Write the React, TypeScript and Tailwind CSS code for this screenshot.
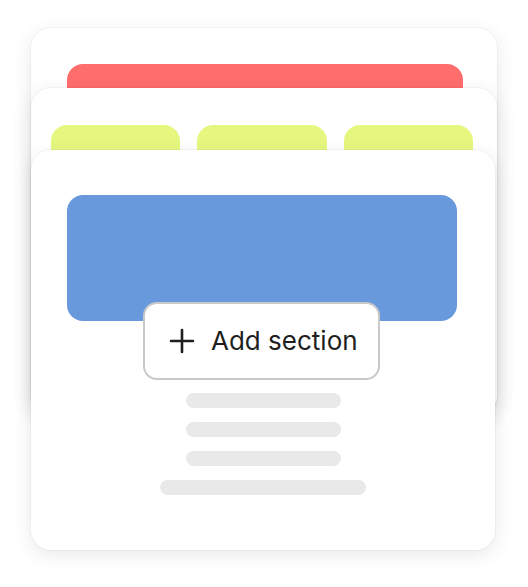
import React from 'react';

const cardShadow = 'shadow-[0_5px_20px_rgba(0,0,0,0.09),0_0_0_1px_rgba(0,0,0,0.03)]';

export default function App() {
    return (
        <div className="w-[528px] h-[587px] bg-white pt-[28px] pl-[31px]">
            <div className="grid w-[466px]">
                {/* back card */}
                <div className={`[grid-area:1/1] h-[387px] rounded-[20px] bg-white pt-[36px] pl-[36px] ${cardShadow}`}>
                    <div className="w-[396px] h-[40px] rounded-t-[16px] bg-[#ff6d6d]" />
                </div>

                {/* middle card */}
                <div className={`[grid-area:1/1] mt-[60px] h-[327px] rounded-[20px] bg-white pt-[37px] pl-[20px] ${cardShadow}`}>
                    <div className="grid grid-cols-3 gap-[17px] w-[422px]">
                        <div className="h-[40px] rounded-t-[16px] bg-[#e6f780]" />
                        <div className="h-[40px] rounded-t-[16px] bg-[#e6f780]" />
                        <div className="h-[40px] rounded-t-[16px] bg-[#e6f780]" />
                    </div>
                </div>

                {/* front card */}
                <div className={`[grid-area:1/1] mt-[122px] w-[464px] h-[400px] rounded-[20px] bg-white pt-[45px] flex flex-col items-center ${cardShadow}`}>
                    <div className="w-[390px] h-[126px] rounded-[16px] bg-[#6999dd] -ml-[3px]" />
                    <button className="-mt-[19px] -ml-[3px] w-[237px] h-[78px] rounded-[14px] border-2 border-[#c9c9c9] bg-white flex items-center pl-[24px] gap-[16px] text-[#1f1f1f]">
                        <svg width="26" height="26" viewBox="0 0 26 26" fill="none" stroke="currentColor" strokeWidth="2.6" strokeLinecap="round">
                            <path d="M13 2v22M2 13h22" />
                        </svg>
                        <span className="text-[26px] leading-none" style={{ fontFamily: '"Inter", "Open Sans", sans-serif' }}>
                            Add section
                        </span>
                    </button>
                    <div className="mt-[13px] flex flex-col items-center gap-[14px]">
                        <div className="w-[155px] h-[15px] rounded-full bg-[#e9e9e9]" />
                        <div className="w-[155px] h-[15px] rounded-full bg-[#e9e9e9]" />
                        <div className="w-[155px] h-[15px] rounded-full bg-[#e9e9e9]" />
                        <div className="w-[206px] h-[15px] rounded-full bg-[#e9e9e9]" />
                    </div>
                </div>
            </div>
        </div>
    );
}
